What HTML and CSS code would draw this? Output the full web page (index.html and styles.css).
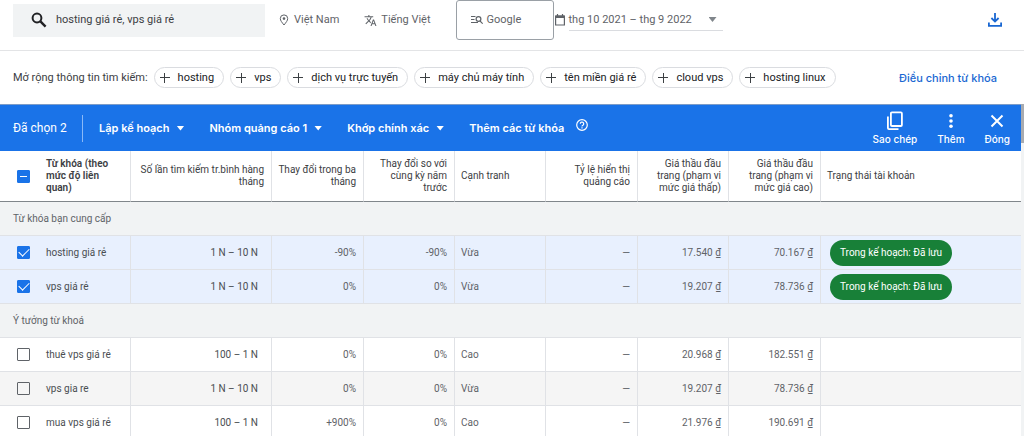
FILE: index.html
```html
<!DOCTYPE html>
<html lang="vi">
<head>
<meta charset="utf-8">
<meta name="viewport" content="width=device-width, initial-scale=1">
<title>Ý tưởng từ khóa</title>
<link rel="stylesheet" href="styles.css">
</head>
<body>
<header class="toolbar">
  <label class="search">
    <svg class="search-icon" viewBox="0 0 16 16" aria-hidden="true"><circle cx="6" cy="6" r="4.4" fill="none" stroke="currentColor" stroke-width="2"/><path d="M9.4 9.4L14.6 14.6" stroke="currentColor" stroke-width="2.4"/></svg>
    <input class="search-input" type="text" value="hosting giá rẻ, vps giá rẻ" aria-label="Từ khóa">
  </label>
  <button class="filter location" type="button">
    <svg width="10" height="12" viewBox="0 0 10 12" aria-hidden="true"><path d="M5 11C3 8.500 1.300 6.500 1.300 4.600a3.700 3.700 0 0 1 7.400 0C8.700 6.500 7 8.500 5 11z" fill="none" stroke="currentColor"/><circle cx="5" cy="4.600" r="1.300" fill="currentColor"/></svg>
    <span>Việt Nam</span>
  </button>
  <button class="filter language" type="button">
    <svg width="13" height="13" viewBox="0 0 24 24" aria-hidden="true"><path fill="currentColor" d="M12.870 15.070l-2.540-2.510.03-.03A17.520 17.520 0 0 0 14.070 6H17V4h-7V2H8v2H1v2h11.170C11.500 7.920 10.440 9.750 9 11.350 8.070 10.320 7.300 9.190 6.690 8h-2c.73 1.630 1.730 3.170 2.980 4.560l-5.090 5.020L4 19l5-5 3.110 3.110.76-2.040zM18.500 10h-2L12 22h2l1.120-3h4.750L21 22h2l-4.500-12zm-2.620 7l1.620-4.330L19.120 17h-3.240z"/></svg>
    <span>Tiếng Việt</span>
  </button>
  <button class="filter network" type="button">
    <svg width="12" height="10" viewBox="0 0 12 10" fill="none" stroke="currentColor" stroke-width="1.200" aria-hidden="true"><path d="M0 1.500h4.500M0 4.500h3.500M0 7.500h7M9 6l2.700 2.700"/><circle cx="7.500" cy="4" r="2.400"/></svg>
    <span>Google</span>
  </button>
  <div class="period">
    <svg width="10" height="12" viewBox="0 0 10 12" aria-hidden="true"><path d="M.6 2h8.800v9H.6zM2.500 0v2M7.500 0v2" fill="none" stroke="currentColor" stroke-width="1.200"/><path d="M.6 1.500h8.800V4H.6z" fill="currentColor"/></svg>
    <button class="period-button" type="button"><span>thg 10 2021 – thg 9 2022</span><i class="caret"></i></button>
  </div>
  <button class="download" type="button" aria-label="Tải xuống">
    <svg width="14" height="14" viewBox="0 0 14 14" fill="none" stroke="currentColor" stroke-width="1.800" aria-hidden="true"><path d="M7 0v8M3.400 5L7 8.600 10.600 5M.9 9.500v3.300h12.200V9.500"/></svg>
  </button>
</header>

<section class="suggestions">
  <span class="suggestions-label">Mở rộng thông tin tìm kiếm:</span>
  <div class="chips">
    <button class="chip" type="button">hosting</button>
    <button class="chip" type="button">vps</button>
    <button class="chip" type="button">dịch vụ trực tuyến</button>
    <button class="chip" type="button">máy chủ máy tính</button>
    <button class="chip" type="button">tên miền giá rẻ</button>
    <button class="chip" type="button">cloud vps</button>
    <button class="chip" type="button">hosting linux</button>
  </div>
  <a class="refine" href="#">Điều chỉnh từ khóa</a>
</section>

<main class="results">
  <div class="panel">
    <div class="actions">
      <span class="count">Đã chọn 2</span>
      <div class="menus">
        <button class="menu" type="button">Lập kế hoạch<i class="caret"></i></button>
        <button class="menu" type="button">Nhóm quảng cáo 1<i class="caret"></i></button>
        <button class="menu" type="button">Khớp chính xác<i class="caret"></i></button>
        <button class="menu" type="button">Thêm các từ khóa</button>
      </div>
      <button class="help" type="button" aria-label="Trợ giúp">
        <svg width="12" height="12" viewBox="0 0 12 12" fill="none" stroke="currentColor" stroke-width="1.200" aria-hidden="true"><circle cx="6" cy="6" r="5.300"/><path d="M4.300 4.800a1.700 1.700 0 1 1 2.600 1.400Q6 6.700 6 7.500M6 8.300v1.200"/></svg>
      </button>
      <div class="tools">
        <button class="tool" type="button">
          <svg width="18" height="20" viewBox="0 0 18 20" fill="none" stroke="currentColor" stroke-width="1.800" aria-hidden="true"><rect x="4.900" y="1.400" width="11" height="13.600" rx="1"/><path d="M1.900 5.500V17q0 1.100 1.100 1.100h9.500"/></svg>
          Sao chép
        </button>
        <button class="tool" type="button">
          <svg width="18" height="20" viewBox="0 0 18 20" fill="currentColor" aria-hidden="true"><circle cx="9" cy="4.800" r="1.800"/><circle cx="9" cy="10" r="1.800"/><circle cx="9" cy="15.200" r="1.800"/></svg>
          Thêm
        </button>
        <button class="tool" type="button">
          <svg width="18" height="20" viewBox="0 0 18 20" fill="none" stroke="currentColor" stroke-width="2" aria-hidden="true"><path d="M3.500 4.500l11 11M14.500 4.500l-11 11"/></svg>
          Đóng
        </button>
      </div>
    </div>

    <table class="keywords">
      <colgroup><col class="c-check"><col class="c-name"><col class="c-volume"><col class="c-wide"><col class="c-std"><col class="c-std"><col class="c-wide"><col class="c-std"><col class="c-wide"><col></colgroup>
      <thead>
        <tr>
          <th class="check"><input class="box partial" type="checkbox" aria-label="Chọn tất cả"></th>
          <th class="name">Từ khóa (theo mức độ liên quan)</th>
          <th>Số lần tìm kiếm tr.bình hàng tháng</th>
          <th>Thay đổi trong ba tháng</th>
          <th>Thay đổi so với cùng kỳ năm trước</th>
          <th class="left">Cạnh tranh</th>
          <th>Tỷ lệ hiển thị quảng cáo</th>
          <th>Giá thầu đầu trang (phạm vi mức giá thấp)</th>
          <th>Giá thầu đầu trang (phạm vi mức giá cao)</th>
          <th class="left">Trạng thái tài khoản</th>
        </tr>
      </thead>
      <tbody>
        <tr class="group"><td colspan="10">Từ khóa bạn cung cấp</td></tr>
        <tr class="selected">
          <td class="check"><input class="box" type="checkbox" checked aria-labelledby="k1"></td><td class="name" id="k1">hosting giá rẻ</td><td class="volume">1 N – 10 N</td><td>-90%</td><td>-90%</td><td class="left">Vừa</td><td>—</td><td>17.540 ₫</td><td>70.167 ₫</td><td class="status"><span class="badge">Trong kế hoạch: Đã lưu</span></td>
        </tr>
        <tr class="selected">
          <td class="check"><input class="box" type="checkbox" checked aria-labelledby="k2"></td><td class="name" id="k2">vps giá rẻ</td><td class="volume">1 N – 10 N</td><td>0%</td><td>0%</td><td class="left">Vừa</td><td>—</td><td>19.207 ₫</td><td>78.736 ₫</td><td class="status"><span class="badge">Trong kế hoạch: Đã lưu</span></td>
        </tr>
        <tr class="group"><td colspan="10">Ý tưởng từ khoá</td></tr>
        <tr>
          <td class="check"><input class="box" type="checkbox" aria-labelledby="k3"></td><td class="name" id="k3">thuê vps giá rẻ</td><td class="volume">100 – 1 N</td><td>0%</td><td>0%</td><td class="left">Cao</td><td>—</td><td>20.968 ₫</td><td>182.551 ₫</td><td class="status"></td>
        </tr>
        <tr class="hovered">
          <td class="check"><input class="box" type="checkbox" aria-labelledby="k4"></td><td class="name" id="k4">vps gia re</td><td class="volume">1 N – 10 N</td><td>0%</td><td>0%</td><td class="left">Vừa</td><td>—</td><td>19.207 ₫</td><td>78.736 ₫</td><td class="status"></td>
        </tr>
        <tr>
          <td class="check"><input class="box" type="checkbox" aria-labelledby="k5"></td><td class="name" id="k5">mua vps giá rẻ</td><td class="volume">100 – 1 N</td><td>+900%</td><td>0%</td><td class="left">Cao</td><td>—</td><td>21.976 ₫</td><td>190.691 ₫</td><td class="status"></td>
        </tr>
      </tbody>
    </table>
  </div>
  <div class="scrollbar" aria-hidden="true"><div class="thumb"></div></div>
</main>
</body>
</html>
```
FILE: styles.css
```css
* { box-sizing: border-box; }

body {
  margin: 0;
  height: 100vh;
  display: flex;
  flex-direction: column;
  overflow: hidden;
  background: #fff;
  color: #3c4043;
  font: 11px/12px Roboto, sans-serif;
}

button, input {
  margin: 0;
  padding: 0;
  border: 0;
  background: none;
  color: inherit;
  font: inherit;
}

button { display: flex; align-items: center; white-space: nowrap; }
svg { flex: none; }

.caret {
  width: 8px;
  height: 5px;
  background: currentColor;
  clip-path: polygon(0 0, 100% 0, 50% 100%);
}

/* Toolbar */
.toolbar {
  flex: none;
  display: flex;
  align-items: center;
  height: 51px;
  padding: 0 22px 10px 13px;
  border-bottom: 1px solid #e3e4e6;
  color: #5f6368;
}

.search {
  display: flex;
  align-items: center;
  gap: 9px;
  width: 252px;
  height: 33px;
  padding: 0 18px;
  background: #f1f3f4;
}

.search-icon { width: 16px; height: 16px; color: #202124; }
.search-input { flex: 1; min-width: 0; color: #3c4043; outline: 0; }

.filter { gap: 4px; }
.location { margin-left: 14px; gap: 5px; }
.language { margin-left: 25px; }

.network {
  width: 98px;
  height: 40px;
  margin-left: 25px;
  padding-left: 14px;
  border: 1px solid #9aa0a6;
  border-radius: 3px;
}

.period { display: flex; align-items: center; gap: 4px; margin-left: 1px; }

.period-button {
  justify-content: space-between;
  width: 154px;
  height: 22px;
  padding-right: 6px;
  border-bottom: 1px solid #dadce0;
}

.period-button .caret { color: #80868b; }
.download { margin-left: auto; color: #1967d2; }

/* Suggested chips */
.suggestions {
  flex: none;
  display: flex;
  align-items: center;
  height: 53px;
  padding: 0 27px 0 13px;
}

.suggestions-label { white-space: nowrap; }
.chips { display: flex; gap: 6px; margin-left: 6px; }

.chip {
  height: 21px;
  gap: 8px;
  padding: 0 9px 0 5px;
  border: 1px solid #dadce0;
  border-radius: 11px;
  color: #202124;
}

.chip::before {
  content: "";
  width: 10px;
  height: 10px;
  background:
    linear-gradient(#3c4043, #3c4043) center / 10px 1px no-repeat,
    linear-gradient(#3c4043, #3c4043) center / 1px 10px no-repeat;
}

.refine {
  margin-left: auto;
  color: #1967d2;
  font: 500 11px/12px Inter, sans-serif;
  text-decoration: none;
  white-space: nowrap;
}

/* Results */
.results { flex: 1; min-height: 0; display: flex; }
.panel { flex: 1; min-width: 0; overflow: hidden; }
.scrollbar { width: 3px; background: #f1f3f4; }
.thumb { height: 39px; background: #a8abb0; }

.actions {
  display: flex;
  align-items: center;
  height: 47px;
  padding: 0 11px 0 13px;
  border-top: 1px solid #7c9cc8;
  background: #1a73e8;
  color: #fff;
  font: 600 11px/12px Inter, sans-serif;
}

.count {
  display: flex;
  align-items: center;
  width: 70px;
  height: 27px;
  border-right: 1px solid #8ab9f7;
  font: 400 12px/12px Roboto, sans-serif;
}

.menus { display: flex; gap: 25px; margin-left: 16px; }
.menu { gap: 7px; }
.help { margin: 0 0 6px 12px; }
.tools { display: flex; gap: 20px; margin-left: auto; }

.tool {
  flex-direction: column;
  gap: 2px;
  font: 500 10px/12px Inter, sans-serif;
}

/* Keyword table */
.keywords {
  width: 100%;
  border-collapse: separate;
  border-spacing: 0;
  table-layout: fixed;
  font-size: 10px;
}

.c-check { width: 46px; }
.c-name { width: 85px; }
.c-volume { width: 141px; }
.c-std { width: 91px; }
.c-wide { width: 92px; }

.keywords th, .keywords td {
  padding: 0 7px 0 4px;
  border-right: 1px solid #e0e2e6;
  border-bottom: 1px solid #e0e2e6;
  text-align: right;
}

.keywords th {
  height: 51px;
  border-bottom-color: #80868b;
  font-weight: 400;
}

.keywords td { height: 34px; color: #5f6368; white-space: nowrap; }
.keywords tr > :last-child { border-right: 0; }

.keywords .check { padding: 0 0 0 17px; border-right: 0; text-align: left; }
.keywords .name { padding: 0 12px 0 0; text-align: left; }
.keywords td.name { padding-right: 0; color: #4a4e52; }
.keywords th.name { font-weight: 600; }
.keywords td.volume { padding-right: 13px; color: #4a4e52; }
.keywords .left { padding: 0 6px; text-align: left; }
.keywords .status { padding: 0 9px; text-align: left; }

.keywords .group td {
  padding: 0 13px;
  background: #f1f3f4;
  text-align: left;
}

.selected td { background: #e8f0fe; }
.hovered td { background: #f5f5f5; }

.box {
  display: grid;
  place-items: center;
  width: 13px;
  height: 13px;
  appearance: none;
  border: 1px solid #5f6368;
  border-radius: 1px;
}

.box:checked, .partial { border-color: #1a73e8; background: #1a73e8; }
.partial::before { content: ""; width: 7px; height: 1px; background: #fff; }

.box:checked::before {
  content: "";
  width: 9px;
  height: 5px;
  margin-bottom: 3px;
  border: solid #fff;
  border-width: 0 0 1px 1px;
  transform: rotate(-45deg);
}

.badge {
  display: inline-flex;
  align-items: center;
  height: 26px;
  padding: 0 10px;
  border-radius: 13px;
  background: #188038;
  color: #fff;
  vertical-align: middle;
}
```
